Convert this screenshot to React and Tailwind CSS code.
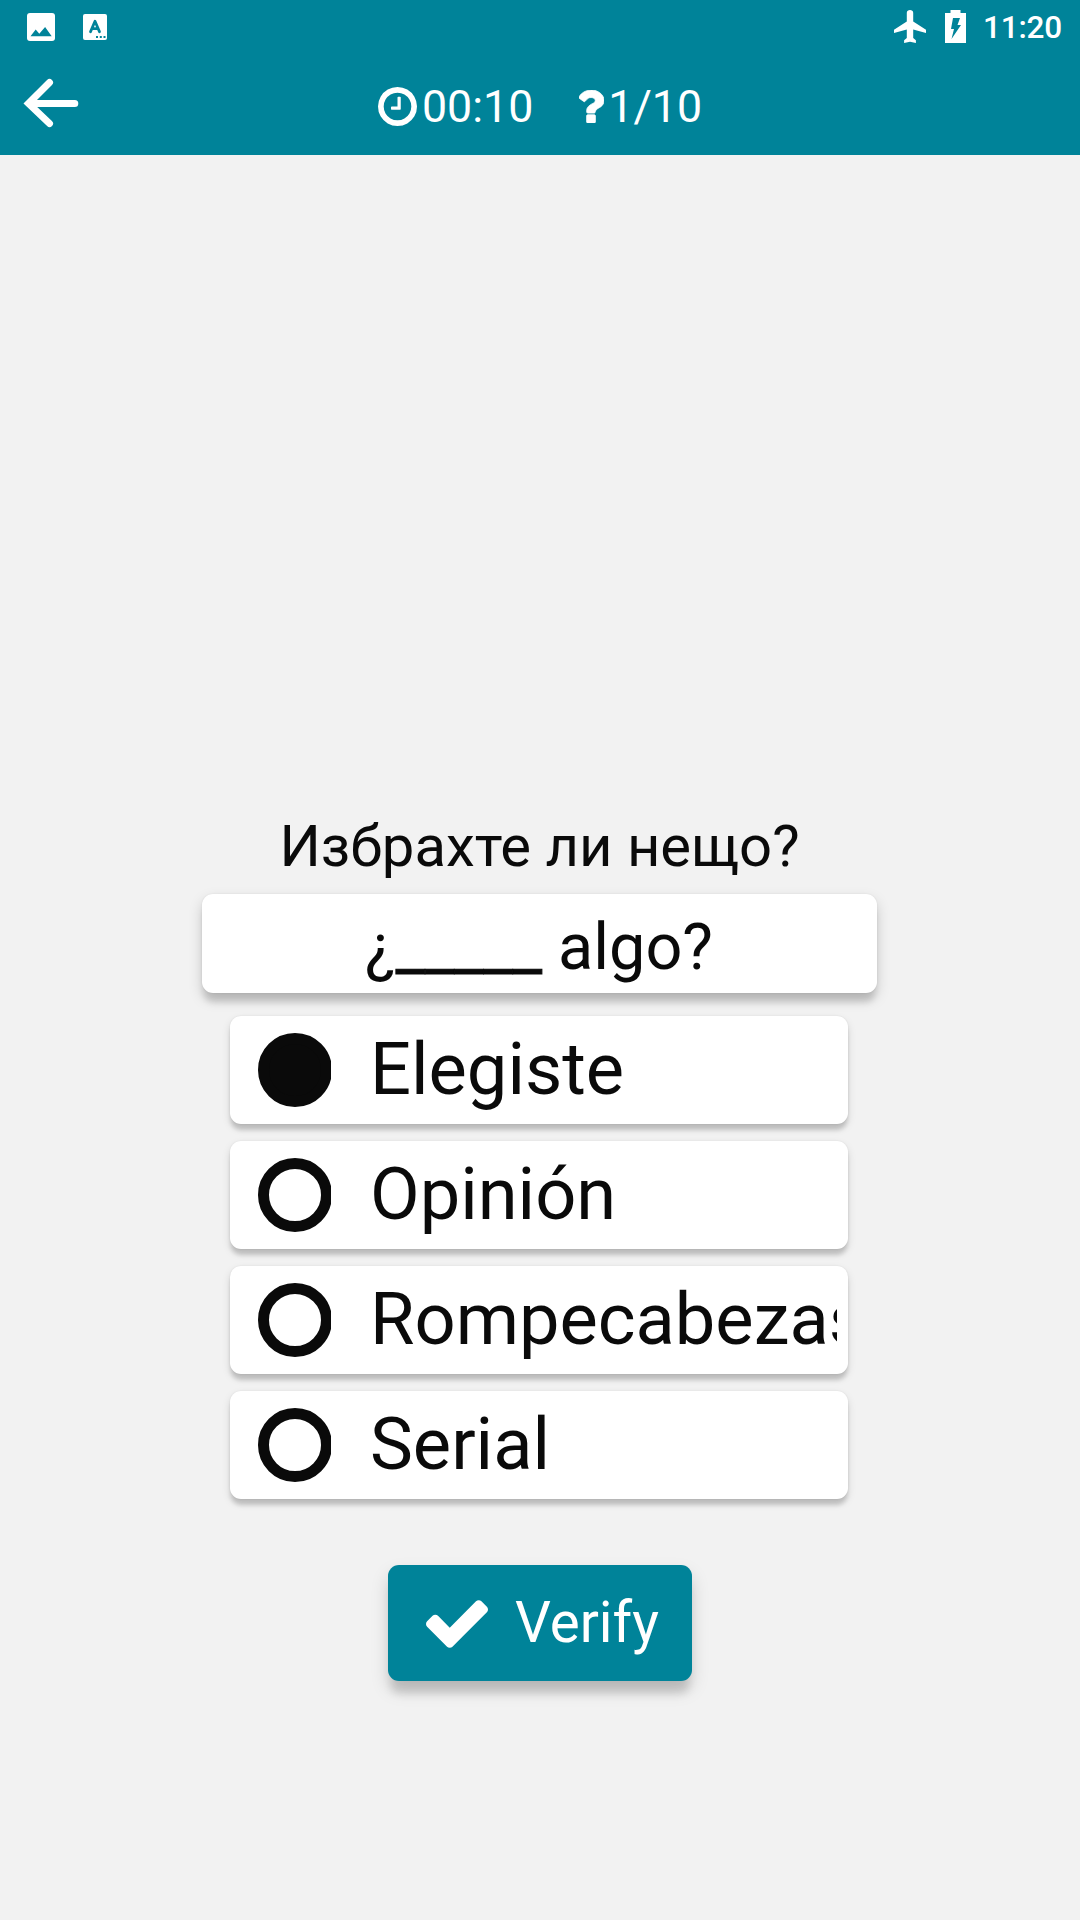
import clsx from 'clsx';
import { useState } from 'react';

const options = ['Elegiste', 'Opinión', 'Rompecabezas', 'Serial'];

const ClockIcon = ({ className }) => (
    <svg viewBox="128 128 1536 1536" fill="currentColor" className={className}>
        <path d="M1024 544v448q0 14-9 23t-23 9h-320q-14 0-23-9t-9-23v-64q0-14 9-23t23-9h224v-352q0-14 9-23t23-9h64q14 0 23 9t9 23zm416 352q0-148-73-273t-198-198-273-73-273 73-198 198-73 273 73 273 198 198 273 73 273-73 198-198 73-273zm224 0q0 209-103 385.5t-279.5 279.5-385.5 103-385.5-103-279.5-279.5-103-385.5 103-385.5 279.5-279.5 385.5-103 385.5 103 279.5 279.5 103 385.5z" />
    </svg>
);

const QuestionIcon = ({ className }) => (
    <svg viewBox="488 256 916 1280" preserveAspectRatio="none" fill="currentColor" className={className}>
        <path d="M1088 1256v240q0 16-12 28t-28 12h-240q-16 0-28-12t-12-28v-240q0-16 12-28t28-12h240q16 0 28 12t12 28zm316-600q0 54-15.5 101t-35 76.5-55 59.5-57.5 43.5-61 35.5q-41 23-68.5 65t-27.5 67q0 17-12 32.5t-28 15.5h-240q-15 0-25.5-18.5t-10.5-37.5v-45q0-83 65-156.5t143-108.5q59-27 84-56t25-76q0-42-46.5-74t-107.5-32q-65 0-108 29-35 25-107 115-13 16-31 16-12 0-25-8l-164-125q-13-10-15.5-25t5.5-28q160-266 464-266 80 0 161 31t146 83 106 127.5 41 158.5z" stroke="currentColor" strokeWidth="30" />
    </svg>
);

const CheckIcon = ({ className }) => (
    <svg viewBox="121 334 1550 1188" fill="currentColor" className={className}>
        <path d="M1671 566q0 40-28 68l-724 724-136 136q-28 28-68 28t-68-28l-136-136-362-362q-28-28-28-68t28-68l136-136q28-28 68-28t68 28l294 295 656-657q28-28 68-28t68 28l136 136q28 28 28 68z" />
    </svg>
);

const StatusBar = () => (
    <div className="flex h-14 items-start justify-between pt-2.5 pr-[18px] pl-[27px]">
        <div className="flex items-start gap-7 pt-[3px]">
            <svg viewBox="0 0 28 28" className="h-7 w-7">
                <rect width="28" height="28" rx="3" fill="#fff" />
                <path d="M3.500 23.200 8.700 16.400l3.600 4.300 5.800-6.600 6.600 9.100z" fill="#008399" />
            </svg>
            <svg viewBox="0 0 24 26" className="mt-px h-[26px] w-6">
                <rect width="24" height="26" rx="2" fill="#fff" />
                <path d="M7.500 17.800 12 7.200l4.500 10.600M9 14.600h6" fill="none" stroke="#008399" strokeWidth="2.8" strokeLinecap="round" strokeLinejoin="round" />
                <path d="M13 22h2v2h-2zM16.800 22h2v2h-2zM20.500 22h2v2h-2z" fill="#008399" />
            </svg>
        </div>
        <div className="flex items-start">
            <svg viewBox="2 2 19 20" preserveAspectRatio="none" fill="currentColor" className="h-[33px] w-8">
                <path d="M21 16v-2l-7.600-5V3.700c0-1.100-.9-1.700-1.900-1.700S9.600 2.600 9.600 3.700V9L2 14v2l7.600-2.200V19l-1.600 1.400V22l3.500-.8 3.500.8v-1.600L13.400 19v-5.200z" />
            </svg>
            <svg viewBox="0 0 21 33" className="ml-[19px] h-[33px] w-[21px]">
                <path d="M5.500 0h10v3H21v30H0V3h5.500z" fill="#fff" />
                <path d="M8 8h7l-2.500 7H16L6.500 29 9 19H6z" fill="#008399" />
            </svg>
            <span className="ml-[17px] text-[31.500px] leading-9 font-medium tracking-[-0.2px]">11:20</span>
        </div>
    </div>
);

export default function App() {
    const [selected, setSelected] = useState(0);

    return (
        <div className="flex h-[1920px] w-[1080px] flex-col overflow-hidden bg-[#f2f2f2] font-['Roboto',sans-serif] text-[#0a0a0a]">
            <header className="h-[155px] shrink-0 bg-[#008399] text-white">
                <StatusBar />
                <div className="flex items-start pl-[23px]">
                    <button type="button" aria-label="Back" className="mt-[22px] h-[50px] w-[58px] cursor-pointer">
                        <svg viewBox="23 78 58 50" fill="none" stroke="currentColor" strokeWidth="7" strokeLinecap="round" className="h-full w-full">
                            <path d="M49.500 82.500 28.500 103.500 49.500 123.500M31 103.500H74.800" />
                        </svg>
                    </button>
                    <div className="mt-6 ml-[297px] flex items-center text-[44.700px] leading-[54px]">
                        <ClockIcon className="-mt-0.5 h-[39px] w-[39px]" />
                        <span className="ml-[5px]">00:10</span>
                        <QuestionIcon className="-mt-0.5 ml-[46px] h-[33px] w-[25px]" />
                        <span className="ml-1">1/10</span>
                    </div>
                </div>
            </header>

            <main className="flex flex-col items-center pt-[656px] pr-0.5">
                <h1 className="ml-px text-[58px] leading-[70px]">Избрахте ли нещо?</h1>
                <div className="mt-[13px] flex h-[99px] w-[675px] justify-center rounded-[11px] bg-white pt-[15px] text-[64.800px] leading-[76px] whitespace-pre shadow-[0_11px_6px_-2px_rgba(0,0,0,0.13),0_6px_14px_rgba(0,0,0,0.17),0_0_2px_rgba(0,0,0,0.08)]">
                    ¿<span className="[-webkit-text-stroke:1px_#0a0a0a]">_____</span> algo?
                </div>

                <div className="mt-[23px] flex flex-col gap-[17px]">
                    {options.map((option, index) => (
                        <button
                            key={option}
                            type="button"
                            onClick={() => setSelected(index)}
                            className="flex h-[108px] w-[618px] cursor-pointer items-center rounded-[11px] bg-white pr-[11px] pl-7 text-left shadow-[0_7px_4px_-1px_rgba(0,0,0,0.14),0_4px_8px_rgba(0,0,0,0.13),0_0_2px_rgba(0,0,0,0.08)]"
                        >
                            <span className="w-[73px] shrink-0 overflow-hidden">
                                <span
                                    className={clsx(
                                        'block h-[74px] w-[74px] rounded-full border-[11px] border-[#0a0a0a]',
                                        selected === index && 'bg-[#0a0a0a]'
                                    )}
                                />
                            </span>
                            <span className="ml-[39px] flex-1 overflow-hidden text-[72.200px] leading-[90px] whitespace-nowrap">
                                {option}
                            </span>
                        </button>
                    ))}
                </div>

                <button
                    type="button"
                    className="mt-[66px] ml-0.5 flex h-[116px] w-[304px] cursor-pointer items-center rounded-[11px] bg-[#008399] pl-[38px] text-[56.500px] text-white shadow-[0_15px_8px_-3px_rgba(0,0,0,0.13),0_9px_18px_rgba(0,0,0,0.15)]"
                >
                    <CheckIcon className="mt-0.5 h-12 w-[62px]" />
                    <span className="ml-[27px]">Verify</span>
                </button>
            </main>
        </div>
    );
}
